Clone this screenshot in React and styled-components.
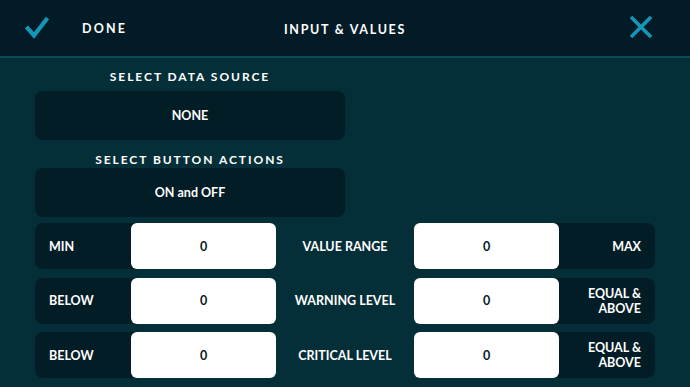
import React from "react";
import styled, { createGlobalStyle } from "styled-components";

const GlobalStyle = createGlobalStyle`
  html, body {
    margin: 0;
    padding: 0;
    background: #052f38;
    font-family: Lato, "Open Sans", sans-serif;
  }
`;

const rows = [
  { left: "MIN", middle: "VALUE RANGE", right: ["MAX"] },
  { left: "BELOW", middle: "WARNING LEVEL", right: ["EQUAL &", "ABOVE"] },
  { left: "BELOW", middle: "CRITICAL LEVEL", right: ["EQUAL &", "ABOVE"] },
];

const App = () => {
  return (
    <Page>
      <GlobalStyle />
      <Header>
        <DoneButton>
          <svg width="24" height="24" viewBox="0 0 24 24">
            <polyline
              points="1.5,11 9,19.5 22.5,2"
              fill="none"
              stroke="#1298b6"
              strokeWidth="4.2"
            />
          </svg>
          <HeaderText>DONE</HeaderText>
        </DoneButton>
        <Title>INPUT &amp; VALUES</Title>
        <CloseButton>
          <svg width="24" height="24" viewBox="0 0 24 24">
            <path
              d="M2 2 L22 22 M22 2 L2 22"
              fill="none"
              stroke="#1298b6"
              strokeWidth="3.6"
            />
          </svg>
        </CloseButton>
      </Header>

      <Content>
        <Column>
          <SectionLabel $top={12}>SELECT DATA SOURCE</SectionLabel>
          <Selector $top={7}>NONE</Selector>
          <SectionLabel $top={13}>SELECT BUTTON ACTIONS</SectionLabel>
          <Selector $top={1}>ON and OFF</Selector>
        </Column>

        <Rows>
          {rows.map((row, i) => (
            <Row key={i}>
              <Field $inputFirst={false}>
                <FieldLabel>{row.left}</FieldLabel>
                <Input>0</Input>
              </Field>
              <MiddleLabel>{row.middle}</MiddleLabel>
              <Field $inputFirst>
                <Input>0</Input>
                <FieldLabel $right>
                  {row.right.map((line) => (
                    <span key={line}>{line}</span>
                  ))}
                </FieldLabel>
              </Field>
            </Row>
          ))}
        </Rows>
      </Content>
    </Page>
  );
};

const Page = styled.div`
  width: 690px;
  height: 387px;
  overflow: hidden;
  background: #052f38;
`;

const Header = styled.div`
  height: 56px;
  background: #031b26;
  border-bottom: 2px solid #0d4a58;
  display: grid;
  grid-template-columns: 1fr auto 1fr;
  align-items: center;
  padding: 0 37px 0 25px;
`;

const DoneButton = styled.div`
  display: flex;
  align-items: center;
  gap: 33px;
  margin-top: -2px;
  svg {
    margin-top: 1px;
  }
`;

const HeaderText = styled.span`
  color: #ffffff;
  font-size: 12.5px;
  font-weight: 700;
  letter-spacing: 2.2px;
  margin-top: 2px;
`;

const Title = styled(HeaderText)`
  text-align: center;
  margin-left: 12px;
  letter-spacing: 1.7px;
`;

const CloseButton = styled.div`
  display: flex;
  justify-content: flex-end;
  margin-top: -2px;
`;

const Content = styled.div`
  padding: 0 35px;
`;

const Column = styled.div`
  width: 310px;
  display: flex;
  flex-direction: column;
`;

const SectionLabel = styled.div`
  margin-top: ${(p) => p.$top}px;
  height: 14px;
  line-height: 14px;
  text-align: center;
  color: #ffffff;
  font-size: 12px;
  font-weight: 700;
  letter-spacing: 1.95px;
`;

const Selector = styled.div`
  margin-top: ${(p) => p.$top}px;
  height: 49px;
  border-radius: 8px;
  background: #031d27;
  display: flex;
  align-items: center;
  justify-content: center;
  color: #ffffff;
  font-size: 12.5px;
  font-weight: 700;
`;

const Rows = styled.div`
  margin-top: 6px;
  display: flex;
  flex-direction: column;
  gap: 8.5px;
  width: 620px;
`;

const Row = styled.div`
  height: 46px;
  display: grid;
  grid-template-columns: 241px 1fr 241px;
`;

const Field = styled.div`
  display: grid;
  grid-template-columns: ${(p) => (p.$inputFirst ? "145px 96px" : "96px 145px")};
  background: #031d27;
  border-radius: 8px;
`;

const FieldLabel = styled.div`
  display: flex;
  flex-direction: column;
  justify-content: center;
  align-items: ${(p) => (p.$right ? "flex-end" : "flex-start")};
  padding: 0 14px;
  color: #ffffff;
  font-size: 12.5px;
  font-weight: 700;
  line-height: 15px;
  text-align: ${(p) => (p.$right ? "right" : "left")};
`;

const Input = styled.div`
  background: #ffffff;
  border-radius: 6px;
  display: flex;
  align-items: center;
  justify-content: center;
  color: #0a1a22;
  font-size: 12.5px;
  font-weight: 700;
`;

const MiddleLabel = styled.div`
  display: flex;
  align-items: center;
  justify-content: center;
  color: #ffffff;
  font-size: 12.5px;
  font-weight: 700;
`;

export default App;
